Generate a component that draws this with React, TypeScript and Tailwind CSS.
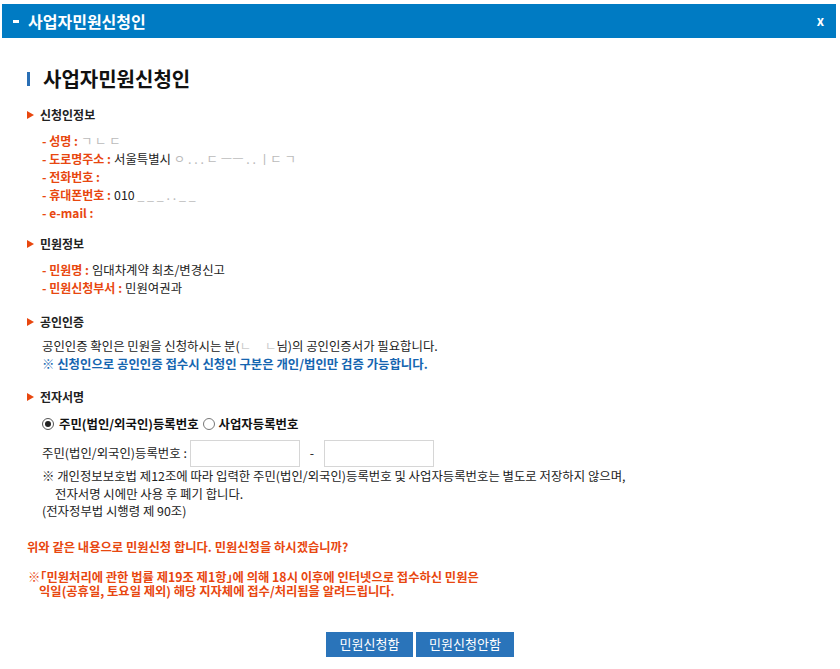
import React from "react";

const font = { fontFamily: '"Noto Sans CJK KR", "Noto Sans", sans-serif' };

function SectionHead({ children, className = "" }: { children: React.ReactNode; className?: string }) {
  return (
    <div className={`flex items-center h-[18px] pl-[27px] ${className}`}>
      <svg width="7" height="8" viewBox="0 0 7 8" className="mr-[6px]">
        <polygon points="0,0 7,4 0,8" fill="#e8470f" />
      </svg>
      <span className="text-[12px] font-bold text-[#222]">{children}</span>
    </div>
  );
}

function Item({ label, value }: { label: string; value?: React.ReactNode }) {
  return (
    <div className="h-[18px] leading-[18px] pl-[42px] text-[12px] whitespace-nowrap">
      <span className="font-bold text-[#e8470f]">- {label} :</span>
      {value ? <span className="text-[#222] ml-[3px] text-[12.4px]">{value}</span> : null}
    </div>
  );
}

export default function App() {
  return (
    <div className="w-[840px] h-[669px] bg-white overflow-hidden" style={font}>
      <div className="h-[4px]" />
      <div className="mx-[2px] w-[834px] h-[34px] bg-[#007bc3] flex items-center justify-between pl-[11px] pr-[12px]">
        <div className="flex items-center">
          <span className="inline-block w-[6px] h-[3px] bg-white mr-[9px]" />
          <span className="text-white font-bold text-[16px]">사업자민원신청인</span>
        </div>
        <span className="text-white font-bold text-[13px]">x</span>
      </div>

      <div className="mt-[27px] h-[28px] flex items-center pl-[27px]">
        <span className="inline-block w-[3px] h-[14px] bg-[#2a6fb5] mr-[13px]" />
        <span className="text-[20px] font-bold text-[#111]">사업자민원신청인</span>
      </div>

      <SectionHead className="mt-[13px]">신청인정보</SectionHead>
      <div className="mt-[8px]">
        <Item label="성명" value={<span className="text-[#bbb]">ㄱ ㄴ ㄷ</span>} />
        <Item label="도로명주소" value={<span>서울특별시 <span className="text-[#bbb]">ㅇ . . . ㄷ ㅡㅡ . . ㅣㄷ ㄱ</span></span>} />
        <Item label="전화번호" />
        <Item label="휴대폰번호" value={<span>010 <span className="text-[#bbb]">_ _ _ . . _ _</span></span>} />
        <Item label="e-mail" />
      </div>

      <SectionHead className="mt-[13px]">민원정보</SectionHead>
      <div className="mt-[8px]">
        <Item label="민원명" value="임대차계약 최초/변경신고" />
        <Item label="민원신청부서" value="민원여권과" />
      </div>

      <SectionHead className="mt-[16px]">공인인증</SectionHead>
      <div className="mt-[6px] pl-[42px] text-[12.4px] leading-[18px] whitespace-nowrap">
        <div className="text-[#222]">
          공인인증 확인은 민원을 신청하시는 분(<span className="text-[#ccc]">ㄴ&nbsp;&nbsp;&nbsp;&nbsp;&nbsp;ㄴ</span>님)의 공인인증서가 필요합니다.
        </div>
        <div className="font-bold text-[#1565b0]">※ 신청인으로 공인인증 접수시 신청인 구분은 개인/법인만 검증 가능합니다.</div>
      </div>

      <SectionHead className="mt-[15px]">전자서명</SectionHead>
      <div className="mt-[9px] pl-[42px] h-[18px] flex items-center text-[12.4px] font-bold text-[#111] whitespace-nowrap">
        <span className="w-[12px] h-[12px] rounded-full border border-[#555] flex items-center justify-center mr-[5px] bg-white">
          <span className="w-[6px] h-[6px] rounded-full bg-[#222]" />
        </span>
        <span>주민(법인/외국인)등록번호</span>
        <span className="w-[12px] h-[12px] rounded-full border border-[#777] ml-[4px] mr-[4px] bg-white" />
        <span>사업자등록번호</span>
      </div>
      <div className="mt-[7px] pl-[42px] h-[27px] flex items-center text-[12.4px] text-[#222] whitespace-nowrap">
        <span className="w-[148px]">주민(법인/외국인)등록번호 :</span>
        <div className="w-[110px] h-[27px] border border-[#d6d6d6]" />
        <span className="w-[24px] text-center">-</span>
        <div className="w-[110px] h-[27px] border border-[#d6d6d6]" />
      </div>
      <div className="mt-[1px] pl-[42px] text-[12.4px] leading-[17.5px] text-[#222] whitespace-nowrap">
        <div>※ 개인정보보호법 제12조에 따라 입력한 주민(법인/외국인)등록번호 및 사업자등록번호는 별도로 저장하지 않으며,</div>
        <div className="pl-[13px]">전자서명 시에만 사용 후 폐기 합니다.</div>
        <div>(전자정부법 시행령 제 90조)</div>
      </div>

      <div className="mt-[17px] pl-[27px] h-[18px] leading-[18px] text-[12.3px] font-bold text-[#e8470f] whitespace-nowrap">
        위와 같은 내용으로 민원신청 합니다. 민원신청을 하시겠습니까?
      </div>
      <div className="mt-[14px] pl-[28px] text-[12.3px] leading-[14.5px] font-bold text-[#e8470f] whitespace-nowrap">
        <div>※｢민원처리에 관한 법률 제19조 제1항｣에 의해 18시 이후에 인터넷으로 접수하신 민원은</div>
        <div className="pl-[11px]">익일(공휴일, 토요일 제외) 해당 지자체에 접수/처리됨을 알려드립니다.</div>
      </div>

      <div className="mt-[33px] flex justify-center gap-[3px]">
        <button className="w-[87px] h-[25px] bg-[#2a74ba] text-white text-[13px]">민원신청함</button>
        <button className="w-[98px] h-[25px] bg-[#2a74ba] text-white text-[13px]">민원신청안함</button>
      </div>
    </div>
  );
}
